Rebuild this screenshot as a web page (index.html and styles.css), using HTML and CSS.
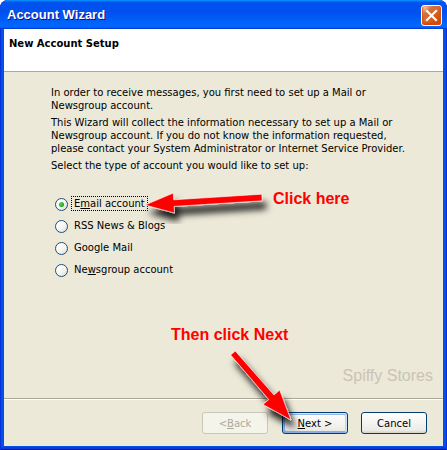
FILE: index.html
```html
<!DOCTYPE html>
<html>
<head>
<meta charset="utf-8">
<link rel="stylesheet" href="styles.css">
</head>
<body>
<div class="window">
  <div class="titlebar">
    <span class="title">Account Wizard</span>
    <span class="close">
      <svg width="21" height="21" viewBox="0 0 21 21"><path d="M6 6 L15 15 M15 6 L6 15" stroke="#fff" stroke-width="2.2" stroke-linecap="square"/></svg>
    </span>
  </div>
  <div class="frame">
    <div class="header"><h1>New Account Setup</h1></div>
    <div class="content">
      <p>In order to receive messages, you first need to set up a Mail or<br>Newsgroup account.</p>
      <p>This Wizard will collect the information necessary to set up a Mail or<br>Newsgroup account. If you do not know the information requested,<br>please contact your System Administrator or Internet Service Provider.</p>
      <p>Select the type of account you would like to set up:</p>
      <ul class="radios">
        <li class="radio"><span class="circle checked"></span><span class="label focus">E<u>m</u>ail account</span></li>
        <li class="radio"><span class="circle"></span><span class="label">RSS News &amp; Blogs</span></li>
        <li class="radio"><span class="circle"></span><span class="label">Google Mail</span></li>
        <li class="radio"><span class="circle"></span><span class="label">Ne<u>w</u>sgroup account</span></li>
      </ul>
      <div class="watermark">Spiffy Stores</div>
    </div>
    <div class="footer">
      <span class="btn disabled">&lt; <u>B</u>ack</span>
      <span class="btn default"><u>N</u>ext &gt;</span>
      <span class="btn cancel">Cancel</span>
    </div>
  </div>
  <svg class="overlay" width="447" height="450" viewBox="0 0 447 450">
    <defs>
      <filter id="sh" x="-30%" y="-30%" width="160%" height="180%">
        <feDropShadow dx="4" dy="8" stdDeviation="3.5" flood-color="#000" flood-opacity="0.9"/>
      </filter>
    </defs>
    <polygon filter="url(#sh)" fill="#ff0000" stroke="#fff" stroke-width="0.6" stroke-linejoin="round"
      points="145,205 173.3,193.1 173.7,199.8 261.8,194.2 262.2,200.8 174.1,206.4 174.5,213.1"/>
    <polygon filter="url(#sh)" fill="#ff0000" stroke="#fff" stroke-width="0.6" stroke-linejoin="round"
      points="235.3,351 274,395 279.7,390.1 291,420 263,404.5 268.8,399.6 230.7,355"/>
  </svg>
  <div class="note note-click">Click here</div>
  <div class="note note-next">Then click Next</div>
</div>
</body>
</html>
```
FILE: styles.css
```css
html, body {
  margin: 0;
  padding: 0;
  background: #fff;
}

.window {
  position: relative;
  width: 447px;
  height: 450px;
  box-sizing: border-box;
  background: #0052e6;
  border-radius: 8px 8px 0 0;
  box-shadow: inset 1px 0 #0831d9, inset -1px 0 #0831d9, inset 0 -1px #001ea0, inset 0 -3px #0a3ad8;
  overflow: hidden;
  font-family: "DejaVu Sans", sans-serif;
  font-size: 10px;
  color: #000;
}

.titlebar {
  height: 29px;
  box-sizing: border-box;
  display: flex;
  align-items: flex-start;
  justify-content: space-between;
  padding: 0 5px 0 7px;
  border-radius: 8px 8px 0 0;
  background: linear-gradient(180deg, #0997ff, #0053ee 8%, #0050ee 40%, #06f 88%, #06f 93%, #005bff 95%, #003dd7 96%, #003dd7);
}

.title {
  margin-top: 7px;
  font-family: "Liberation Sans", Arial, sans-serif;
  font-weight: bold;
  font-size: 13px;
  line-height: 16px;
  color: #fff;
  text-shadow: 1px 1px #0f1089;
}

.close {
  margin-top: 5px;
  width: 21px;
  height: 21px;
  box-sizing: border-box;
  border: 1px solid #fff;
  border-radius: 3px;
  background: radial-gradient(circle at 90% 90%, #cc4600 0, #dc6527 55%, #cd7546 70%, #ffccb2 90%, #fff 100%);
  box-shadow: inset 0 -1px 2px 1px #da4600;
  display: flex;
  align-items: center;
  justify-content: center;
}

.close svg {
  display: block;
  margin: -1px;
}

.frame {
  margin: 0 4px 4px;
  background: #ece9d8;
}

.header {
  height: 43px;
  box-sizing: border-box;
  background: #fff;
  border-bottom: 1px solid #aca899;
  padding: 8px 0 0 5px;
}

.header h1 {
  margin: 0;
  font-size: 10px;
  line-height: 13px;
  font-weight: bold;
}

.content {
  height: 327px;
  box-sizing: border-box;
  border-bottom: 1px solid #aca899;
  padding: 14px 10px 13px 47px;
  display: flex;
  flex-direction: column;
}

.content p {
  margin: 0 0 4px;
  line-height: 13px;
  white-space: nowrap;
}

.radios {
  list-style: none;
  margin: 16px 0 0;
  padding: 0 0 0 4px;
}

.radio {
  height: 22px;
  display: flex;
  align-items: center;
}

.circle {
  width: 13px;
  height: 13px;
  box-sizing: border-box;
  margin-top: 2px;
  border: 1px solid #1c5180;
  border-radius: 50%;
  background: linear-gradient(135deg, #dcdcd7, #fff 20%, #f4f4f0 60%, #d8d5c8);
  display: flex;
  align-items: center;
  justify-content: center;
}

.circle.checked::after {
  content: "";
  width: 5px;
  height: 5px;
  border-radius: 50%;
  background: radial-gradient(circle at 35% 35%, #55d551, #21a121 70%);
}

.label {
  margin-left: 3px;
  padding: 0 2px;
  line-height: 13px;
  border: 1px solid transparent;
}

.label.focus {
  border: 1px dotted #000;
}

.watermark {
  margin-top: auto;
  text-align: right;
  font-family: "Liberation Sans", Arial, sans-serif;
  font-size: 16px;
  line-height: 18px;
  color: #c8c4b7;
}

.footer {
  height: 47px;
  box-sizing: border-box;
  border-top: 1px solid #fff;
  padding: 12px 16px 0 0;
  display: flex;
  justify-content: flex-end;
  align-items: flex-start;
}

.btn {
  width: 66px;
  height: 22px;
  box-sizing: border-box;
  border: 1px solid #003c74;
  border-radius: 3px;
  background: linear-gradient(180deg, #fff, #ecebe6 86%, #d6d0c5);
  display: flex;
  align-items: center;
  justify-content: center;
  line-height: 13px;
}

.btn.disabled {
  border-color: #c9c7ba;
  background: #f5f4ea;
  color: #aca899;
}

.btn.default {
  margin-left: 14px;
  box-shadow: inset -1px 1px #cee7ff, inset 1px 2px #98b8ea, inset -2px 2px #bcd4f6, inset 1px -1px #89ade4, inset 2px -2px #89ade4;
}

.btn.cancel {
  margin-left: 13px;
}

.overlay {
  position: absolute;
  left: 0;
  top: 0;
  pointer-events: none;
}

.note {
  position: absolute;
  font-family: "Liberation Sans", Arial, sans-serif;
  font-weight: bold;
  font-size: 16px;
  line-height: 18px;
  color: #ff0000;
  white-space: nowrap;
}

.note-click {
  left: 273px;
  top: 190px;
}

.note-next {
  left: 171px;
  top: 326px;
}
```
